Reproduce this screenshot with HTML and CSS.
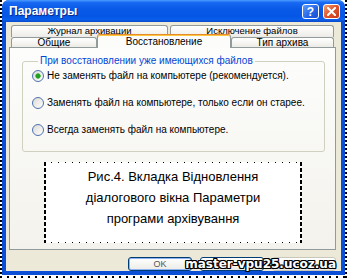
FILE: index.html
```html
<!DOCTYPE html>
<html lang="ru">

<head>
    <meta charset="UTF-8">
    <title>Параметры</title>
    <link rel="stylesheet" href="styles.css">
</head>

<body>
    <div class="page">
        <div class="window">
            <!-- заголовок окна -->
            <div class="titlebar">
                <span class="title">Параметры</span>
                <div class="title-buttons">
                    <span class="tbtn help">?</span>
                    <span class="tbtn close">
                        <svg width="9" height="9" viewBox="0 0 9 9"><path d="M1 1L8 8M8 1L1 8" stroke="#fff" stroke-width="2" stroke-linecap="square"/></svg>
                    </span>
                </div>
            </div>
            <div class="body">
                <!-- вкладки -->
                <div class="tabs">
                    <div class="tab-row back">
                        <div class="tab t-journal">Журнал архивации</div>
                        <div class="tab t-excl">Исключение файлов</div>
                    </div>
                    <div class="tab-row front">
                        <div class="tab t-general">Общие</div>
                        <div class="tab t-restore active">Восстановление</div>
                        <div class="tab t-type">Тип архива</div>
                    </div>
                </div>
                <div class="panel">
                    <fieldset class="group">
                        <legend>При восстановлении уже имеющихся файлов</legend>
                        <div class="radio"><span class="dot checked"></span>Не заменять файл на компьютере (рекомендуется).</div>
                        <div class="radio"><span class="dot"></span>Заменять файл на компьютере, только если он старее.</div>
                        <div class="radio"><span class="dot"></span>Всегда заменять файл на компьютере.</div>
                    </fieldset>
                    <div class="caption">Рис.4. Вкладка Відновлення<br>діалогового вікна Параметри<br>програми архівування</div>
                </div>
                <!-- кнопки (подписи второй и третьей закрыты водяным знаком) -->
                <div class="buttons">
                    <span class="btn default">OK</span>
                    <span class="btn"></span>
                    <span class="btn disabled"></span>
                </div>
                <div class="watermark">master-vpu25.ucoz.ua</div>
            </div>
        </div>
    </div>
</body>

</html>
```

FILE: styles.css
```css
* {
    margin: 0;
    padding: 0;
    box-sizing: border-box;
}

body {
    background: #fff;
    font-family: "Liberation Sans", Arial, sans-serif;
}

.page {
    width: 347px;
    height: 278px;
    padding: 0 2px 3px 2px;
    background:
        repeating-linear-gradient(to bottom, #000 0 2px, #fff 2px 4px) left top / 2px 100% no-repeat,
        repeating-linear-gradient(to bottom, #000 0 2px, #fff 2px 4px) right top / 2px 100% no-repeat,
        repeating-linear-gradient(to right, #000 0 2px, #fff 2px 7px) left bottom / 100% 2px no-repeat,
        #fff;
}

.window {
    height: 275px;
    display: flex;
    flex-direction: column;
    padding: 0 4px 4px 4px;
    background: #0b4fd6;
    border-radius: 7px 7px 0 0;
}

.titlebar {
    height: 22px;
    margin: 0 -4px;
    padding: 0 5px 0 7px;
    display: flex;
    align-items: center;
    justify-content: space-between;
    border-radius: 7px 7px 0 0;
    background: linear-gradient(to bottom, #4b9bff 0, #1768f2 12%, #0a5ae8 40%, #0556e4 75%, #0b5fec 90%, #0848c8 100%);
}

.title {
    color: #fff;
    font-weight: bold;
    font-size: 12px;
    text-shadow: 1px 1px #0a2a8c;
}

.title-buttons {
    display: flex;
    gap: 4px;
    margin-top: 1px;
}

.tbtn {
    width: 17px;
    height: 15px;
    border: 1px solid #fff;
    border-radius: 3px;
    display: flex;
    align-items: center;
    justify-content: center;
    color: #fff;
    font-weight: bold;
    font-size: 12px;
}

.help {
    background: linear-gradient(135deg, #5a9cff, #2362e6 60%, #1a4fd0);
}

.close {
    background: linear-gradient(135deg, #f0a070, #e0542c 50%, #c83a18);
}

.body {
    flex: 1;
    position: relative;
    background: #ece9d8;
    padding: 3px 5px 0 3px;
}

/* вкладки */
.tabs {
    height: 22px;
}

.tab-row {
    display: flex;
    padding: 0 2px;
}

.back {
    height: 12px;
    gap: 2px;
}

.front {
    height: 10px;
    align-items: flex-start;
}

.tab {
    height: 100%;
    border: 1px solid #919b9c;
    border-bottom: 0;
    border-radius: 3px 3px 0 0;
    background: linear-gradient(#fff, #ecebe6);
    font-size: 10px;
    text-align: center;
    color: #000;
}

.back .tab {
    font-size: 9.5px;
    line-height: 9px;
}

.front .tab {
    line-height: 9px;
}

.t-journal {
    width: 157px;
}

.t-excl {
    width: 164px;
}

.t-general {
    width: 86px;
}

.t-type {
    width: 103px;
}

.front .t-restore {
    width: 134px;
    height: 14px;
    margin-top: -3px;
    padding-top: 1px;
    line-height: 11px;
    z-index: 1;
    background: #fcfcfb;
    border-top-color: #e68b2c;
    box-shadow: inset 0 1px #ffc83c;
}

.panel {
    height: 203px;
    border: 1px solid #919b9c;
    background: linear-gradient(#fdfdfc, #f3f2ec);
    padding-top: 7px;
}

.group {
    margin: 0 10px 0 12px;
    padding: 2px 0 15px 9px;
    border: 1px solid #d0d0bf;
    border-radius: 3px;
    display: flex;
    flex-direction: column;
    gap: 14px;
}

.group legend {
    margin-left: 6px;
    padding: 0 2px;
    font-size: 10px;
    line-height: 12px;
    color: #0046d5;
}

.radio {
    display: flex;
    align-items: center;
    height: 13px;
    font-size: 10px;
    color: #000;
}

.dot {
    width: 12px;
    height: 12px;
    margin-right: 3px;
    border: 1px solid #4d72b0;
    border-radius: 50%;
    background: linear-gradient(135deg, #dcdad2, #fff);
}

.dot.checked {
    background:
        radial-gradient(circle, #21a121 0 2px, #5cc05c 2.5px, transparent 3px),
        linear-gradient(135deg, #dcdad2, #fff);
}

.caption {
    width: 258px;
    height: 81px;
    margin: 10px 0 0 34px;
    padding-top: 4px;
    font-size: 13px;
    line-height: 21px;
    text-align: center;
    color: #000;
    background:
        repeating-linear-gradient(to right, #000 0 1px, transparent 1px 7px) left top / 100% 1px no-repeat,
        repeating-linear-gradient(to right, #000 0 1px, transparent 1px 7px) left bottom / 100% 1px no-repeat,
        repeating-linear-gradient(to bottom, #000 0 4px, transparent 4px 6px) left top / 2px 100% no-repeat,
        repeating-linear-gradient(to bottom, #000 0 4px, transparent 4px 6px) right top / 2px 100% no-repeat,
        #fff;
}

/* кнопки */
.buttons {
    display: flex;
    justify-content: flex-end;
    gap: 8px;
    margin-top: 7px;
}

.btn {
    width: 64px;
    height: 14px;
    border: 1px solid #003c74;
    border-radius: 3px;
    background: linear-gradient(#fff, #ecebe6);
    font-size: 9px;
    line-height: 12px;
    text-align: center;
    color: #555;
}

.btn.default {
    box-shadow: inset 0 0 0 1px #8fb2f0;
}

.btn.disabled {
    border-color: #c9c7ba;
}

.watermark {
    position: absolute;
    right: 5px;
    bottom: -2px;
    font-family: "DejaVu Sans", sans-serif;
    font-weight: bold;
    font-size: 12px;
    line-height: 18px;
    color: #fff;
    text-shadow: 1px 0 #000, -1px 0 #000, 0 1px #000, 0 -1px #000, 1px 1px #000, -1px -1px #000, 1px -1px #000, -1px 1px #000;
}
```
